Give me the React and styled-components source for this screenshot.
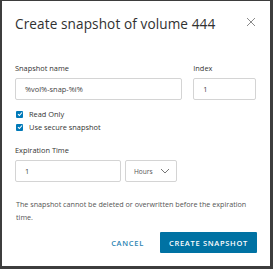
import React from "react";
import styled, { createGlobalStyle } from "styled-components";

const Global = createGlobalStyle`
  html, body {
    margin: 0;
    padding: 0;
    background: #3d3d3d;
  }
  body {
    font-family: "Open Sans", "Liberation Sans", sans-serif;
  }
`;

const Frame = styled.div`
  padding: 1px 3px 3px 2px;
  width: 273px;
  height: 269px;
  box-sizing: border-box;
`;

const Dialog = styled.div`
  background: #fff;
  height: 100%;
  box-sizing: border-box;
  padding: 12px 14px 0 13px;
  display: flex;
  flex-direction: column;
  color: #333;
`;

const Header = styled.div`
  display: flex;
  align-items: center;
  justify-content: space-between;
  height: 20px;
`;

const Title = styled.h1`
  margin: 0;
  font-size: 13.6px;
  font-weight: 400;
  color: #313131;
  letter-spacing: 0.1px;
`;

const Close = styled.button`
  border: none;
  background: none;
  padding: 0;
  width: 12px;
  height: 12px;
  display: flex;
  margin-right: -2px;
`;

const Row = styled.div`
  display: flex;
  gap: ${(p) => p.gap || 11}px;
  margin-top: ${(p) => p.top || 0}px;
`;

const Field = styled.div`
  display: flex;
  flex-direction: column;
  width: ${(p) => p.width}px;
`;

const Label = styled.label`
  font-size: 7.4px;
  color: #333;
  height: 12px;
  line-height: 12px;
  margin-bottom: 4px;
  margin-top: 1px;
`;

const Input = styled.div`
  height: 22px;
  box-sizing: border-box;
  border: 1px solid #d4d4d4;
  border-radius: 2px;
  padding: 0 9px;
  display: flex;
  align-items: center;
  font-size: 7.4px;
  color: #444;
`;

const Select = styled(Input)`
  width: 52px;
  justify-content: space-between;
  padding: 0 6px 0 8px;
  font-size: 6.6px;
  color: #555;
`;

const Checks = styled.div`
  display: flex;
  flex-direction: column;
  gap: 5px;
  margin-top: 10px;
`;

const Check = styled.div`
  display: flex;
  align-items: center;
  font-size: 7.4px;
  color: #333;
  height: 8px;
`;

const Box = styled.span`
  width: 7px;
  height: 7px;
  background: #0079b8;
  border-radius: 1px;
  margin: 0 6px 0 1px;
  display: flex;
  align-items: center;
  justify-content: center;
`;

const Note = styled.p`
  margin: 16px 0 0 1px;
  max-width: 236px;
  font-size: 7.2px;
  line-height: 13px;
  color: #555;
`;

const Footer = styled.div`
  display: flex;
  justify-content: flex-end;
  align-items: center;
  gap: 16px;
  margin-top: 8px;
  margin-right: -1px;
`;

const Button = styled.button`
  height: 21px;
  border: none;
  border-radius: 1px;
  padding: 0 ${(p) => (p.primary ? "9px" : "0")};
  background: ${(p) => (p.primary ? "#0072a3" : "transparent")};
  color: ${(p) => (p.primary ? "#fff" : "#2b84b3")};
  font-family: "Open Sans", "Liberation Sans", sans-serif;
  font-weight: 600;
  font-size: 7.5px;
  letter-spacing: 0.7px;
`;

const Tick = () => (
  <svg width="6" height="6" viewBox="0 0 6 6">
    <path d="M1 3.2 L2.4 4.5 L5 1.5" stroke="#fff" strokeWidth="1.1" fill="none" />
  </svg>
);

export default function App() {
  return (
    <Frame>
      <Global />
      <Dialog>
        <Header>
          <Title>Create snapshot of volume 444</Title>
          <Close>
            <svg width="10" height="10" viewBox="0 0 10 10">
              <path d="M1 1 L9 9 M9 1 L1 9" stroke="#8a8a8a" strokeWidth="1" />
            </svg>
          </Close>
        </Header>
        <Row top={28}>
          <Field width={168}>
            <Label>Snapshot name</Label>
            <Input>%vol%-snap-%i%</Input>
          </Field>
          <Field width={63}>
            <Label>Index</Label>
            <Input>1</Input>
          </Field>
        </Row>
        <Checks>
          <Check>
            <Box>
              <Tick />
            </Box>
            Read Only
          </Check>
          <Check>
            <Box>
              <Tick />
            </Box>
            Use secure snapshot
          </Check>
        </Checks>
        <Row top={12} gap={4}>
          <Field width={106}>
            <Label>Expiration Time</Label>
            <Input>1</Input>
          </Field>
          <Field width={52}>
            <Label>&nbsp;</Label>
            <Select>
              Hours
              <svg width="10" height="6" viewBox="0 0 10 6">
                <path d="M1 1 L5 5 L9 1" stroke="#666" strokeWidth="0.9" fill="none" />
              </svg>
            </Select>
          </Field>
        </Row>
        <Note>
          The snapshot cannot be deleted or overwritten before the expiration
          time.
        </Note>
        <Footer>
          <Button>CANCEL</Button>
          <Button primary>CREATE SNAPSHOT</Button>
        </Footer>
      </Dialog>
    </Frame>
  );
}
